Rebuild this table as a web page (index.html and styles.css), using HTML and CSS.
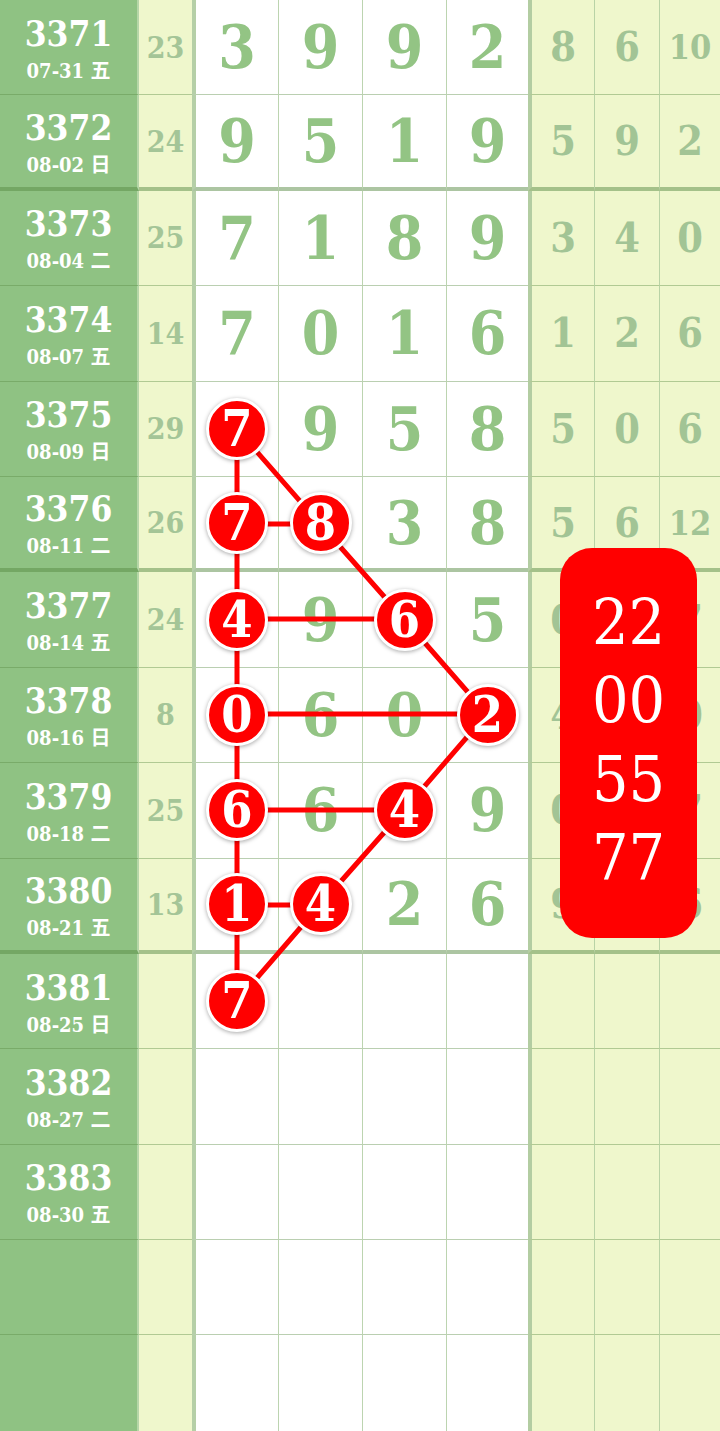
FILE: index.html
```html
<!DOCTYPE html>
<html lang="zh">
<head>
<meta charset="utf-8">
<title>走势图</title>
<link rel="stylesheet" href="styles.css">
</head>
<body>
<div class="chart">
  <div class="row"><div class="issue"><b>3371</b><span>07-31 五</span></div><div class="sum">23</div><div class="d first">3</div><div class="d">9</div><div class="d">9</div><div class="d">2</div><div class="s first">8</div><div class="s">6</div><div class="s small">10</div></div>
  <div class="row thick"><div class="issue"><b>3372</b><span>08-02 日</span></div><div class="sum">24</div><div class="d first">9</div><div class="d">5</div><div class="d">1</div><div class="d">9</div><div class="s first">5</div><div class="s">9</div><div class="s">2</div></div>
  <div class="row"><div class="issue"><b>3373</b><span>08-04 二</span></div><div class="sum">25</div><div class="d first">7</div><div class="d">1</div><div class="d">8</div><div class="d">9</div><div class="s first">3</div><div class="s">4</div><div class="s">0</div></div>
  <div class="row"><div class="issue"><b>3374</b><span>08-07 五</span></div><div class="sum">14</div><div class="d first">7</div><div class="d">0</div><div class="d">1</div><div class="d">6</div><div class="s first">1</div><div class="s">2</div><div class="s">6</div></div>
  <div class="row"><div class="issue"><b>3375</b><span>08-09 日</span></div><div class="sum">29</div><div class="d first"><i class="ball">7</i></div><div class="d">9</div><div class="d">5</div><div class="d">8</div><div class="s first">5</div><div class="s">0</div><div class="s">6</div></div>
  <div class="row thick"><div class="issue"><b>3376</b><span>08-11 二</span></div><div class="sum">26</div><div class="d first"><i class="ball">7</i></div><div class="d"><i class="ball">8</i></div><div class="d">3</div><div class="d">8</div><div class="s first">5</div><div class="s">6</div><div class="s small">12</div></div>
  <div class="row"><div class="issue"><b>3377</b><span>08-14 五</span></div><div class="sum">24</div><div class="d first"><i class="ball">4</i></div><div class="d">9</div><div class="d"><i class="ball">6</i></div><div class="d">5</div><div class="s first">0</div><div class="s">4</div><div class="s">7</div></div>
  <div class="row"><div class="issue"><b>3378</b><span>08-16 日</span></div><div class="sum">8</div><div class="d first"><i class="ball">0</i></div><div class="d">6</div><div class="d">0</div><div class="d"><i class="ball">2</i></div><div class="s first">4</div><div class="s">2</div><div class="s">0</div></div>
  <div class="row"><div class="issue"><b>3379</b><span>08-18 二</span></div><div class="sum">25</div><div class="d first"><i class="ball">6</i></div><div class="d">6</div><div class="d"><i class="ball">4</i></div><div class="d">9</div><div class="s first">0</div><div class="s">3</div><div class="s">7</div></div>
  <div class="row thick"><div class="issue"><b>3380</b><span>08-21 五</span></div><div class="sum">13</div><div class="d first"><i class="ball">1</i></div><div class="d"><i class="ball">4</i></div><div class="d">2</div><div class="d">6</div><div class="s first">9</div><div class="s">5</div><div class="s">6</div></div>
  <div class="row"><div class="issue"><b>3381</b><span>08-25 日</span></div><div class="sum"></div><div class="d first"><i class="ball">7</i></div><div class="d"></div><div class="d"></div><div class="d"></div><div class="s first"></div><div class="s"></div><div class="s"></div></div>
  <div class="row"><div class="issue"><b>3382</b><span>08-27 二</span></div><div class="sum"></div><div class="d first"></div><div class="d"></div><div class="d"></div><div class="d"></div><div class="s first"></div><div class="s"></div><div class="s"></div></div>
  <div class="row"><div class="issue"><b>3383</b><span>08-30 五</span></div><div class="sum"></div><div class="d first"></div><div class="d"></div><div class="d"></div><div class="d"></div><div class="s first"></div><div class="s"></div><div class="s"></div></div>
  <div class="row"><div class="issue"></div><div class="sum"></div><div class="d first"></div><div class="d"></div><div class="d"></div><div class="d"></div><div class="s first"></div><div class="s"></div><div class="s"></div></div>
  <div class="row last"><div class="issue"></div><div class="sum"></div><div class="d first"></div><div class="d"></div><div class="d"></div><div class="d"></div><div class="s first"></div><div class="s"></div><div class="s"></div></div>

  <svg class="links" width="720" height="1431" viewBox="0 0 720 1431">
    <line x1="237" y1="429" x2="237" y2="1001"/>
    <line x1="237" y1="524" x2="320" y2="524"/>
    <line x1="237" y1="619" x2="404" y2="619"/>
    <line x1="237" y1="714" x2="487" y2="714"/>
    <line x1="237" y1="810" x2="404" y2="810"/>
    <line x1="237" y1="905" x2="320" y2="905"/>
    <polyline points="237,429 320,524 404,619 487,714 404,810 320,905 237,1001"/>
  </svg>

  <div class="popup">22<br>00<br>55<br>77</div>
</div>
</body>
</html>
```
FILE: styles.css
```css
html, body {
  margin: 0;
  padding: 0;
  background: #ffffff;
}
.chart {
  position: relative;
  width: 720px;
  height: 1431px;
  overflow: hidden;
  font-family: "DejaVu Serif Condensed", "DejaVu Serif", "Noto Sans CJK SC", serif;
  font-stretch: condensed;
  font-weight: bold;
}
.row {
  display: grid;
  grid-template-columns: 139px 53px 86px 84px 84px 82px 66px 65px 61px;
  height: 95.4px;
}
.row > div {
  display: flex;
  align-items: center;
  justify-content: center;
  box-sizing: border-box;
  border-bottom: 1px solid rgba(90, 140, 70, 0.42);
}
.row.thick > div {
  border-bottom: 4px solid rgba(90, 140, 70, 0.5);
}
.row.last > div {
  border-bottom: none;
}
.issue {
  flex-direction: column;
  padding-top: 3px;
  background: #8fc283;
  border-right: 2px solid #b6d6a8;
  color: #ffffff;
}
.issue b {
  font-size: 35px;
  line-height: 36px;
}
.issue span {
  font-size: 20px;
  line-height: 22px;
  margin-top: 8px;
}
.sum {
  background: #eff7cc;
  color: #a4c597;
  font-size: 30px;
}
.d {
  background: #ffffff;
  color: #93c484;
  font-size: 60px;
  border-left: 1px solid #bcd4b0;
}
.d.first {
  border-left: 4px solid #b5cfa7;
}
.s {
  background: #eff7cc;
  color: #a2c495;
  font-size: 41px;
  border-left: 1px solid #b9d3a6;
}
.s.first {
  border-left: 4px solid #b3cda2;
}
.s.small {
  font-size: 34px;
}
.ball {
  position: relative;
  z-index: 2;
  display: flex;
  align-items: center;
  justify-content: center;
  width: 56px;
  height: 56px;
  border: 3px solid #ffffff;
  border-radius: 50%;
  background: #ff0000;
  color: #ffffff;
  font-style: normal;
  font-size: 50px;
  line-height: 1;
  box-shadow: 0 1px 4px rgba(0, 0, 0, 0.35);
}
.links {
  position: absolute;
  left: 0;
  top: 0;
  z-index: 1;
  pointer-events: none;
}
.links line,
.links polyline {
  stroke: #ff0000;
  stroke-width: 5;
  fill: none;
}
.popup {
  position: absolute;
  left: 560px;
  top: 548px;
  width: 137px;
  height: 390px;
  box-sizing: border-box;
  padding-top: 36px;
  border-radius: 32px;
  background: #ff0000;
  color: #ffffff;
  z-index: 3;
  text-align: center;
  font-weight: normal;
  font-size: 64px;
  line-height: 78px;
}
```
